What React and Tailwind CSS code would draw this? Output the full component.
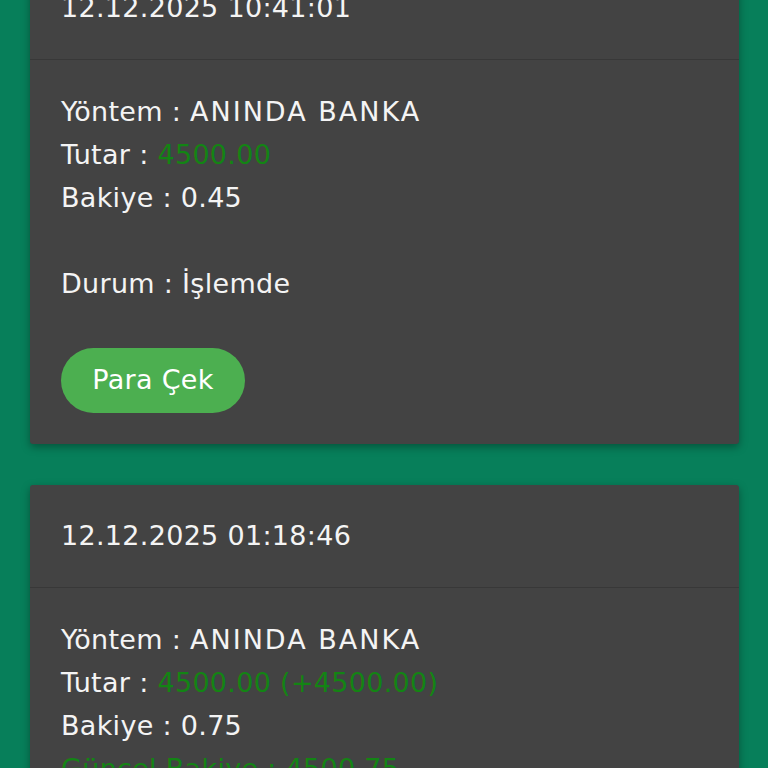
const font = { fontFamily: '"DejaVu Sans", "Open Sans", sans-serif' }

function Row({ label, children }) {
  return (
    <div className="leading-[43px] whitespace-nowrap">
      {label} : {children}
    </div>
  )
}

function Card({ date, children }) {
  return (
    <div className="bg-[#434343] rounded-[3px] shadow-[0_3px_8px_rgba(0,0,0,0.35)]">
      <div className="h-[103px] flex items-center px-[31px] border-b border-[#383838]">
        {date}
      </div>
      <div className="px-[31px] pt-[30px] pb-[31px]">{children}</div>
    </div>
  )
}

export default function App() {
  return (
    <div
      className="h-[768px] overflow-hidden bg-[#077f5a] px-[30px] pr-[29px] text-[27px] tracking-[0.3px] text-[#f4f4f4]"
      style={font}
    >
      <div className="mt-[-43px] flex flex-col gap-[41px]">
        <Card date="12.12.2025 10:41:01">
          <Row label="Yöntem"><span className="tracking-[2px]">ANINDA BANKA</span></Row>
          <Row label="Tutar"><span className="text-[#138414]">4500.00</span></Row>
          <Row label="Bakiye">0.45</Row>
          <div className="h-[43px]" />
          <Row label="Durum">İşlemde</Row>
          <button className="mt-[43px] h-[65px] w-[184px] rounded-full bg-[#4caf50] text-[27px] text-white">
            Para Çek
          </button>
        </Card>
        <Card date="12.12.2025 01:18:46">
          <Row label="Yöntem"><span className="tracking-[2px]">ANINDA BANKA</span></Row>
          <Row label="Tutar"><span className="text-[#138414]">4500.00 (+4500.00)</span></Row>
          <Row label="Bakiye">0.75</Row>
          <div className="leading-[43px] text-[#138414]">Güncel Bakiye : 4500.75</div>
          <div className="h-[43px]" />
          <Row label="Durum">Tamamlandı</Row>
        </Card>
      </div>
    </div>
  )
}
